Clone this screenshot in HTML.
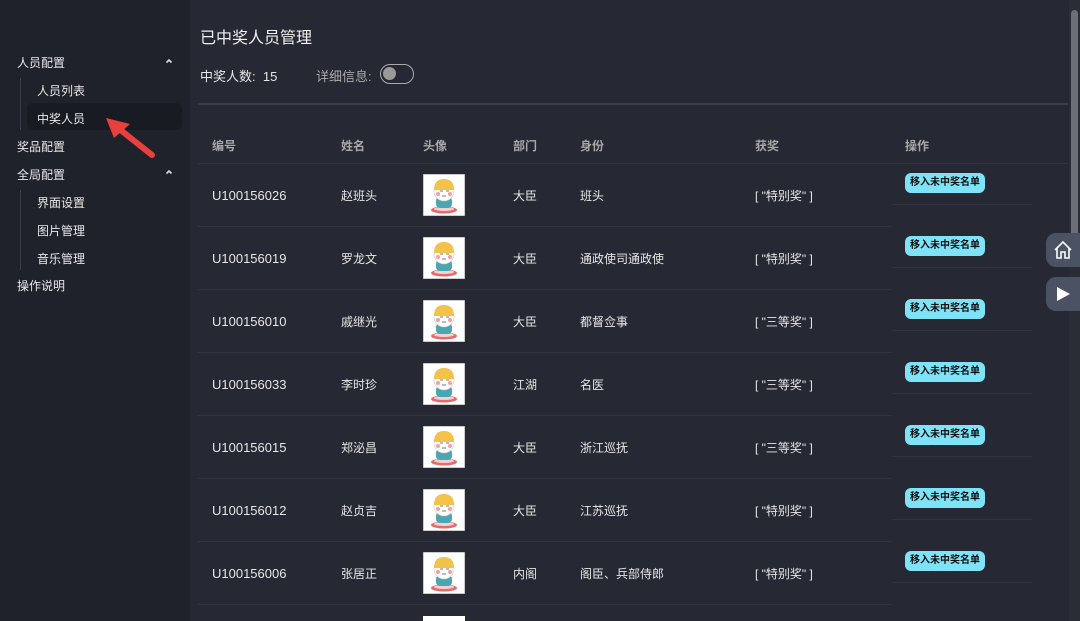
<!DOCTYPE html>
<html style="width:1080px;height:621px;overflow:hidden"><head><meta charset="utf-8"><style>
*{margin:0;padding:0;box-sizing:border-box}
html,body{width:1080px;height:621px;overflow:hidden}
body{background:#262833;font-family:"Liberation Sans","Noto Sans CJK SC",sans-serif;color:#e6e6e6;position:relative}
.side{position:absolute;left:0;top:0;width:190px;height:621px;background:#1f212b}
.si{position:absolute;font-size:12px;color:#e8e8e8}
.car{position:absolute;left:165px;width:8px;height:8px}
.vl{position:absolute;left:20px;width:1px;background:#3a3c47}
.sel{position:absolute;left:27px;top:103px;width:155px;height:27px;background:#191b23;border-radius:6px}
.t{position:absolute;white-space:nowrap}
.hl{position:absolute;height:1px;background:#31333e}
.btn{position:absolute;left:905px;width:80px;height:20px;background:#7fe3f8;border-radius:6px;color:#111;font-size:10px;font-weight:bold;display:flex;align-items:center;justify-content:center;line-height:1}
.av{position:absolute;left:423px;width:42px;height:42px}
.fb{position:absolute;left:1046px;width:34px;height:34px;background:#4a5263;border-radius:10px 0 0 10px}
#wrap{position:absolute;left:0;top:0;width:1080px;height:621px;overflow:hidden}
</style></head><body><div id="wrap">
<svg width="0" height="0" style="position:absolute"><defs><symbol id="a" viewBox="0 0 42 42">
<rect width="42" height="42" fill="#fff" stroke="#999" stroke-width="1"/>
<ellipse cx="21" cy="36" rx="13" ry="3.5" fill="#e46a6a"/>
<ellipse cx="21" cy="35" rx="10" ry="2" fill="#f6d0d0"/>
<rect x="13" y="23" width="16" height="11" rx="4" fill="#4aa6b0"/>
<circle cx="21" cy="17" r="10" fill="#fbfbfb" stroke="#ccc" stroke-width=".6"/>
<path d="M11 16 Q11 5 21 5 Q31 5 31 16 Z" fill="#f2c24a"/>
<circle cx="15" cy="20" r="2" fill="#f5a0a0"/><circle cx="27" cy="20" r="2" fill="#f5a0a0"/>
<path d="M17 17h3M23 17h3M19 22h4" stroke="#555" stroke-width=".8"/>
</symbol></defs></svg>
<div class="side">
<div class="si" style="left:17px;top:54px">人员配置</div>
<svg class="car" style="top:57px" viewBox="0 0 8 8"><path d="M1.5 5.5L4 3L6.5 5.5" stroke="#ddd" stroke-width="1.6" fill="none"/></svg>
<div class="vl" style="top:78px;height:52px"></div>
<div class="si" style="left:37px;top:82px">人员列表</div>
<div class="sel"></div>
<div class="si" style="left:37px;top:110px">中奖人员</div>
<div class="si" style="left:17px;top:138px">奖品配置</div>
<div class="si" style="left:17px;top:166px">全局配置</div>
<svg class="car" style="top:168px" viewBox="0 0 8 8"><path d="M1.5 5.5L4 3L6.5 5.5" stroke="#ddd" stroke-width="1.6" fill="none"/></svg>
<div class="vl" style="top:190px;height:80px"></div>
<div class="si" style="left:37px;top:194px">界面设置</div>
<div class="si" style="left:37px;top:222px">图片管理</div>
<div class="si" style="left:37px;top:250px">音乐管理</div>
<div class="si" style="left:17px;top:277px">操作说明</div>
</div>
<svg style="position:absolute;left:100px;top:112px" width="64" height="54" viewBox="0 0 64 54"><path d="M52 43L18 16" stroke="#e8413d" stroke-width="6" stroke-linecap="round"/><path d="M6 6L30 12L14 26Z" fill="#e8413d"/></svg>
<div class="t" style="left:200px;top:24px;font-size:16px;color:#f0f0f0">已中奖人员管理</div>
<div class="t" style="left:200px;top:66px;font-size:13px">中奖人数: &nbsp;15</div>
<div class="t" style="left:316px;top:66px;font-size:13px;color:#aaa">详细信息:</div>
<div style="position:absolute;left:380px;top:64px;width:34px;height:20px;border:1.5px solid #aaa;border-radius:10px"><div style="position:absolute;left:2px;top:2px;width:13px;height:13px;border-radius:50%;background:#999"></div></div>
<div class="hl" style="left:198px;top:103px;width:870px;height:2px;background:#3a3c47"></div>
<div style="font-size:12px;color:#a8a8a8;font-weight:bold">
<div class="t" style="left:212px;top:137px">编号</div><div class="t" style="left:341px;top:137px">姓名</div><div class="t" style="left:423px;top:137px">头像</div><div class="t" style="left:513px;top:137px">部门</div><div class="t" style="left:580px;top:137px">身份</div><div class="t" style="left:755px;top:137px">获奖</div><div class="t" style="left:905px;top:137px">操作</div>
</div>
<div class="hl" style="left:198px;top:163px;width:870px"></div>
<div id="rows"></div>
<div style="position:absolute;left:423px;top:616px;width:42px;height:5px;background:#fff"></div>
<div style="position:absolute;left:1069px;top:0;width:11px;height:621px;background:#2a2c36"></div>
<div style="position:absolute;left:1071px;top:10px;width:7px;height:250px;background:#6d6f78;border-radius:4px"></div>
<div class="fb" style="top:233px"><svg width="34" height="34" viewBox="0 0 34 34"><path d="M9 17L17 9L25 17M11 15V25H15V19H19V25H23V15" stroke="#fff" stroke-width="1.6" fill="none"/></svg></div>
<div class="fb" style="top:277px"><svg width="34" height="34" viewBox="0 0 34 34"><path d="M11 10L24 17L11 24Z" fill="#fff"/></svg></div>
</div>
<script>
var d=[["U100156026","赵班头","大臣","班头","特别奖"],["U100156019","罗龙文","大臣","通政使司通政使","特别奖"],["U100156010","戚继光","大臣","都督佥事","三等奖"],["U100156033","李时珍","江湖","名医","三等奖"],["U100156015","郑泌昌","大臣","浙江巡抚","三等奖"],["U100156012","赵贞吉","大臣","江苏巡抚","特别奖"],["U100156006","张居正","内阁","阁臣、兵部侍郎","特别奖"]];
var h="";d.forEach(function(r,i){var y=163+i*63;
h+='<div class="t" style="left:212px;top:'+(y+25)+'px;font-size:13px">'+r[0]+'</div><div class="t" style="left:341px;top:'+(y+24)+'px;font-size:12px">'+r[1]+'</div><svg class="av" style="top:'+(y+11)+'px"><use href="#a"/></svg><div class="t" style="left:513px;top:'+(y+24)+'px;font-size:12px">'+r[2]+'</div><div class="t" style="left:580px;top:'+(y+24)+'px;font-size:12px">'+r[3]+'</div>';
h+='<div class="t" style="left:755px;top:'+(y+24)+'px;font-size:12px">[ "'+r[4]+'" ]</div><div class="btn" style="top:'+(y+10)+'px">移入未中奖名单</div><div class="hl" style="left:198px;top:'+(y+63)+'px;width:694px"></div><div class="hl" style="left:892px;top:'+(y+41)+'px;width:140px"></div>';
});document.getElementById("rows").innerHTML=h;
</script>
</body></html>
